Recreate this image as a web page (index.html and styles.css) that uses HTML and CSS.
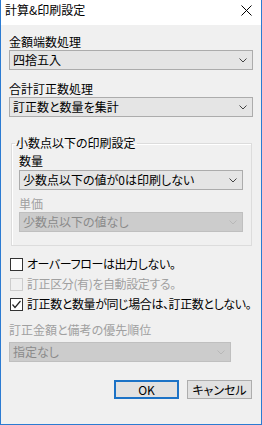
FILE: index.html
```html
<!DOCTYPE html>
<html lang="ja">
<head>
<meta charset="UTF-8">
<title>計算&amp;印刷設定</title>
<link rel="stylesheet" href="styles.css">
</head>
<body>

<div class="window">
    <div class="titlebar">
        <span class="title">計算&amp;印刷設定</span>
        <svg class="close" width="11" height="11" viewBox="0 0 11 11">
            <path d="M0.5 0.5 L10.5 10.5 M10.5 0.5 L0.5 10.5" stroke="#000" stroke-width="1" fill="none"/>
        </svg>
    </div>

    <div class="content">
        <div class="label first">金額端数処理</div>
        <div class="combo">
            <span>四捨五入</span>
            <svg class="arrow" width="8" height="5" viewBox="0 0 8 5"><path d="M0.5 0.5 L4 4 L7.5 0.5" stroke="#444" fill="none"/></svg>
        </div>

        <div class="label gap">合計訂正数処理</div>
        <div class="combo">
            <span>訂正数と数量を集計</span>
            <svg class="arrow" width="8" height="5" viewBox="0 0 8 5"><path d="M0.5 0.5 L4 4 L7.5 0.5" stroke="#444" fill="none"/></svg>
        </div>

        <fieldset class="group">
            <legend>小数点以下の印刷設定</legend>
            <div class="label inner">数量</div>
            <div class="combo">
                <span>少数点以下の値が0は印刷しない</span>
                <svg class="arrow" width="8" height="5" viewBox="0 0 8 5"><path d="M0.5 0.5 L4 4 L7.5 0.5" stroke="#444" fill="none"/></svg>
            </div>
            <div class="label disabled gap-small">単価</div>
            <div class="combo disabled">
                <span>少数点以下の値なし</span>
                <svg class="arrow" width="8" height="5" viewBox="0 0 8 5"><path d="M0.5 0.5 L4 4 L7.5 0.5" stroke="#b8b8b8" fill="none"/></svg>
            </div>
        </fieldset>

        <div class="checks">
            <div class="check">
                <span class="box"></span>
                <span class="text">オーバーフローは出力しない。</span>
            </div>
            <div class="check disabled">
                <span class="box"></span>
                <span class="text">訂正区分(有)を自動設定する。</span>
            </div>
            <div class="check">
                <span class="box">
                    <svg width="11" height="11" viewBox="0 0 11 11"><path d="M1.5 5.5 L4 8.5 L9.5 2" stroke="#222" stroke-width="1.2" fill="none"/></svg>
                </span>
                <span class="text">訂正数と数量が同じ場合は、訂正数としない。</span>
            </div>
        </div>

        <div class="label disabled priority">訂正金額と備考の優先順位</div>
        <div class="combo disabled short">
            <span>指定なし</span>
            <svg class="arrow" width="8" height="5" viewBox="0 0 8 5"><path d="M0.5 0.5 L4 4 L7.5 0.5" stroke="#b8b8b8" fill="none"/></svg>
        </div>

        <div class="buttons">
            <div class="button default">OK</div>
            <div class="button">キャンセル</div>
        </div>
    </div>
</div>

</body>
</html>
```

FILE: styles.css
```css
body {
    margin: 0;
    padding: 0;
    font-family: "Noto Sans CJK JP", "Liberation Sans", sans-serif;
    font-size: 12px;
    font-feature-settings: "palt";
    color: #000;
    background-color: #f0f0f0;
}

.window {
    width: 262px;
    height: 425px;
    box-sizing: border-box;
    border: 1px solid #2b7bd2;
    border-top: none;
    background-color: #f0f0f0;
}

.titlebar {
    height: 25px;
    background-color: #ffffff;
    display: flex;
    align-items: center;
    justify-content: space-between;
    padding: 0 9px 0 4px;
}

.title {
    line-height: 16px;
    margin-top: -6px;
}

.close {
    margin-top: -4px;
}

.content {
    padding: 9px 8px 0 8px;
}

.label {
    line-height: 16px;
    height: 16px;
    white-space: nowrap;
}

.label.gap {
    margin-top: 11px;
}

.label.inner {
    margin-top: 2px;
}

.label.gap-small {
    margin-top: 6px;
}

.label.priority {
    margin-top: 8px;
}

.disabled {
    color: #a0a0a0;
}

.combo {
    height: 20px;
    box-sizing: border-box;
    border: 1px solid #acacac;
    background-color: #e5e5e5;
    display: flex;
    align-items: center;
    justify-content: space-between;
    padding: 0 5px 0 3px;
    line-height: 16px;
    white-space: nowrap;
}

.combo.disabled {
    background-color: #cccccc;
    border-color: #bfbfbf;
    color: #8a8a8a;
}

.combo.short {
    width: 222px;
    margin-top: 4px;
}

.group {
    margin: 18px 1px 0 2px;
    padding: 0 8px 13px 7px;
    border: 1px solid #dcdcdc;
    box-shadow: inset 1px 1px 0 #ffffff;
}

.group legend {
    padding: 0 1px;
    margin-left: -4px;
    line-height: 16px;
}

.group .combo {
    margin-top: 1px;
}

.group .combo.disabled {
    margin-top: 0;
}

.checks {
    margin-top: 8px;
}

.check {
    display: flex;
    align-items: center;
    height: 20px;
    line-height: 16px;
    white-space: nowrap;
}

.check .text {
    letter-spacing: -0.4px;
}

.check .box {
    flex: none;
    width: 13px;
    height: 13px;
    box-sizing: border-box;
    border: 1px solid #333333;
    background-color: #ffffff;
    margin: 0 4px 0 1px;
    display: flex;
    align-items: center;
    justify-content: center;
}

.check.disabled .box {
    border-color: #cccccc;
    background-color: #f0f0f0;
}

.buttons {
    display: flex;
    justify-content: flex-end;
    gap: 8px;
    margin-top: 18px;
    padding-right: 1px;
}

.button {
    width: 65px;
    height: 19px;
    box-sizing: border-box;
    background-color: #e1e1e1;
    border: 1px solid #adadad;
    display: flex;
    align-items: center;
    justify-content: center;
    line-height: 16px;
}

.button.default {
    border: 2px solid #1b72c6;
}
```
